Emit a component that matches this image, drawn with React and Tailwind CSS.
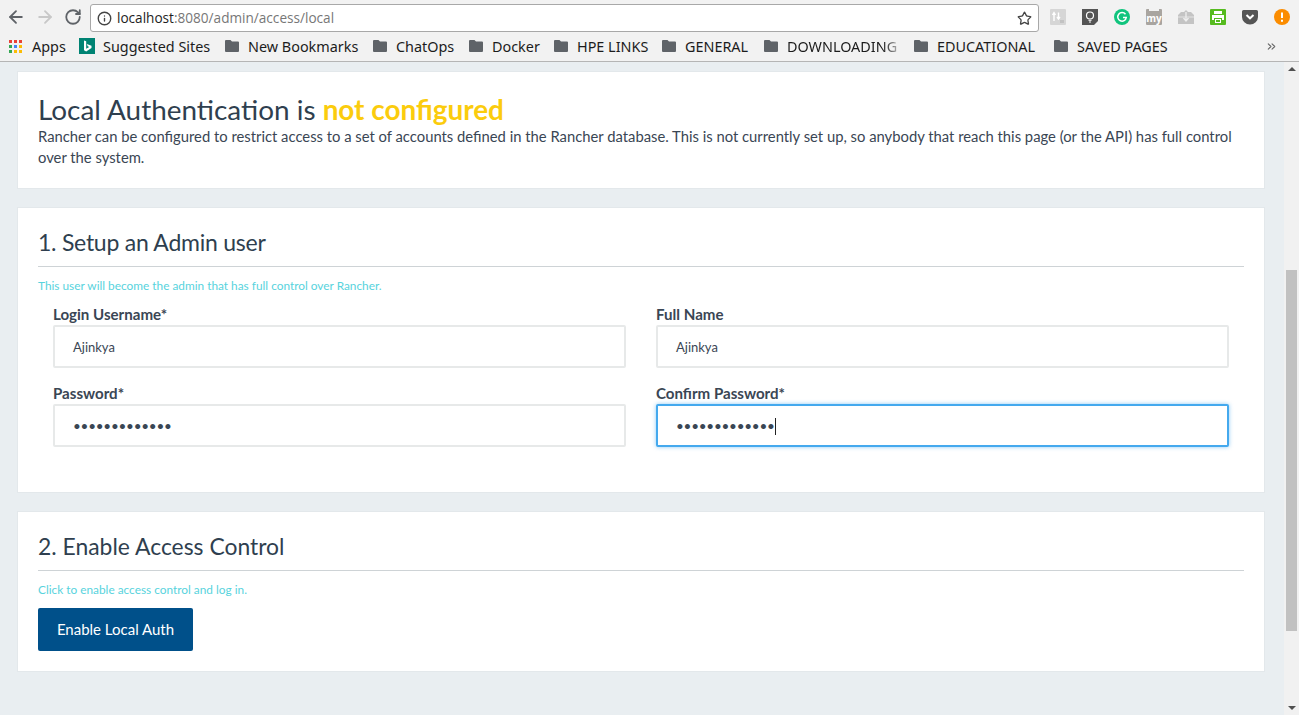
import React from "react";
import { ArrowLeft, ArrowRight, RotateCw, Info, Star, ChevronsRight } from "lucide-react";

const Folder = () => (
  <svg width="14" height="12" viewBox="0 0 14 12" className="shrink-0">
    <path d="M1 0h4.5l1.5 1.5h6a1 1 0 0 1 1 1V11a1 1 0 0 1-1 1H1a1 1 0 0 1-1-1V1a1 1 0 0 1 1-1z" fill="#5f6368" />
  </svg>
);

const AppsIcon = () => {
  const c = ["#ea4335", "#ea4335", "#ea4335", "#34a853", "#4285f4", "#fbbc05", "#34a853", "#fbbc05", "#fbbc05"];
  return (
    <div className="grid grid-cols-3 gap-[2px] w-[13px] shrink-0 mr-[1px]">
      {c.map((x, i) => (
        <span key={i} className="w-[3px] h-[3px]" style={{ background: x }} />
      ))}
    </div>
  );
};

const Bing = () => (
  <svg width="16" height="16" viewBox="0 0 16 16" className="shrink-0 mr-[-1px]">
    <rect width="16" height="16" fill="#008373" />
    <path d="M5 2.5l2.2.8v7.4l3-1.7-1.5-.7-.9-2.2 4.7 1.6v2.4L7.2 13.5 5 12.3z" fill="#fff" />
  </svg>
);

const Mark = ({ label, icon, w }) => (
  <div className="flex items-center shrink-0" style={{ width: w }}>
    {icon}
    <span className="ml-[9px] whitespace-nowrap">{label}</span>
  </div>
);

const ExtIcons = () => (
  <div className="flex items-center ml-[11px] gap-[16px]">
    <svg width="16" height="16" viewBox="0 0 16 16"><rect width="16" height="16" rx="1" fill="#d6d6d6" /><path d="M4 12V5M2.500 6L4 3.500 5.500 6M8.500 3.500v6M7 8l1.500 2L10 8" stroke="#fff" strokeWidth="1.400" fill="none" /><rect x="10" y="11" width="4" height="3" fill="#c2c2c2" /></svg>
    <svg width="16" height="16" viewBox="0 0 16 16"><path d="M0 0h16v12l-4 4H0z" fill="#555" /><circle cx="8" cy="6.500" r="3.500" fill="none" stroke="#fff" strokeWidth="1.200" /><path d="M6.500 11.300h3M7 13h2" stroke="#fff" /></svg>
    <svg width="16" height="16" viewBox="0 0 16 16"><circle cx="8" cy="8" r="8" fill="#10c47d" /><path d="M11.500 5.300A4.300 4.300 0 1 0 12.300 8.500H9" fill="none" stroke="#fff" strokeWidth="1.500" /></svg>
    <svg width="16" height="16" viewBox="0 0 16 16"><path d="M1 0h2v2h10V0h2a1 1 0 0 1 1 1v14a1 1 0 0 1-1 1H1a1 1 0 0 1-1-1V1a1 1 0 0 1 1-1z" fill="#a9a5a0" /><text x="8" y="13" textAnchor="middle" fontSize="10" fontWeight="700" fill="#fff" fontFamily="Open Sans">my</text></svg>
    <svg width="16" height="16" viewBox="0 0 16 16"><path d="M0 6l3-3h3l2-2 2 2h3l3 3v9H0z" fill="#c4c4c4" /><path d="M0 8h16" stroke="#e4e4e4" /><path d="M8 3v8M5.500 9L8 12l2.500-3" stroke="#eee" strokeWidth="1.300" fill="none" /></svg>
    <svg width="16" height="16" viewBox="0 0 16 16"><rect width="16" height="16" rx="1" fill="#56bb1f" /><path d="M4 2h8v3H4zM2 6h12v5h-2V9H4v2H2zM5 10h6v4H5z" fill="#fff" /><path d="M6 11h4v2H6z" fill="#56bb1f" /></svg>
    <svg width="16" height="16" viewBox="0 0 16 16"><path d="M1.500 1h13A1.500 1.500 0 0 1 16 2.500V8a8 7.500 0 0 1-16 0V2.500A1.500 1.500 0 0 1 1.500 1z" fill="#555" /><path d="M4.500 6L8 9.300 11.500 6" fill="none" stroke="#fff" strokeWidth="2" /></svg>
    <svg width="16" height="16" viewBox="0 0 16 16"><circle cx="8" cy="8" r="8" fill="#fb8c00" /><path d="M8 3.500v5.500M8 10.800v2" stroke="#fff" strokeWidth="2" /></svg>
  </div>
);

const Field = ({ label, value, focused, password }) => (
  <div className="flex-1 min-w-0">
    <div className="text-[15.100px] font-bold leading-[20px] text-[#3a4654]">{label}</div>
    <div
      className={
        "mt-[1px] h-[43px] flex items-center pt-[2px] pl-[18px] bg-white text-[13px] text-[#3a4654] border-2 rounded-[2px] " +
        (focused ? "border-[#44a9ee] shadow-[0_0_4px_rgba(68,169,238,0.6)]" : "border-[#e7e9e9]")
      }
    >
      {password ? (
        <>
          <span className="text-[13.500px] tracking-[-0.250px] leading-none">{"•".repeat(13)}</span>
          {focused && <span className="w-px h-[17px] bg-[#222]" />}
        </>
      ) : (
        value
      )}
    </div>
  </div>
);

const Card = ({ className, children }) => (
  <section className={"bg-white border border-[#e3e8eb] ml-[17px] mr-[19px] px-[20px] " + className}>{children}</section>
);

export default function App() {
  return (
    <div className="w-[1299px] h-[715px] overflow-hidden flex flex-col bg-[#e9eef1] font-['Lato',sans-serif] text-[#34414e]">
      <header className="h-[62px] shrink-0 bg-[#f2f2f2] border-b border-[#b5b5b5] font-['Open_Sans',sans-serif]">
        <div className="h-[34px] flex items-center">
          <div className="flex items-center pl-[6px] gap-[9px] w-[90px] text-[#5f6368]">
            <ArrowLeft size={20} strokeWidth={2.200} />
            <ArrowRight size={20} strokeWidth={2.200} className="text-[#c8c8c8]" />
            <RotateCw size={18} strokeWidth={2.400} />
          </div>
          <div className="w-[949px] h-[28px] mt-[2px] bg-white border border-[#a8a8a8] rounded-[3px] flex items-center pl-[6px] pr-[6px] text-[13.600px]">
            <Info size={15} strokeWidth={2.200} className="text-[#444]" />
            <span className="ml-[5px] text-[#1e1e1e]">localhost</span>
            <span className="text-[#777]">:8080/admin/access/local</span>
            <Star size={15} strokeWidth={2.100} className="ml-auto text-[#444]" />
          </div>
          <ExtIcons />
        </div>
        <div className="h-[25px] flex items-center pl-[9px] text-[14.400px] font-['Noto_Sans',sans-serif] text-[#1c1c1c] relative">
          <Mark w={70} label="Apps" icon={<AppsIcon />} />
          <Mark w={146} label="Suggested Sites" icon={<Bing />} />
          <Mark w={148} label="New Bookmarks" icon={<Folder />} />
          <Mark w={96} label="ChatOps" icon={<Folder />} />
          <Mark w={85} label="Docker" icon={<Folder />} />
          <Mark w={108} label="HPE LINKS" icon={<Folder />} />
          <Mark w={102} label="GENERAL" icon={<Folder />} />
          <div className="flex items-center shrink-0 w-[150px]">
            <Folder />
            <span className="ml-[9px] w-[113px] overflow-hidden whitespace-nowrap bg-gradient-to-r from-[#1c1c1c] from-[85%] to-[#d0d0d0] bg-clip-text text-transparent">DOWNLOADING</span>
          </div>
          <Mark w={140} label="EDUCATIONAL" icon={<Folder />} />
          <Mark w={200} label="SAVED PAGES" icon={<Folder />} />
          <ChevronsRight size={13} className="text-[#666] absolute right-[21px] top-[6px]" />
        </div>
      </header>

      <div className="flex-1 flex min-h-0">
        <main className="w-[1284px] pt-[9px] flex flex-col gap-[18px]">
          <Card className="h-[118px] pt-[20px]">
            <h1 className="text-[27.900px] leading-[34px] text-[#2f3f4f]">
              Local Authentication is <span className="text-[#fbcc0d] font-bold">not configured</span>
            </h1>
            <p className="text-[14.800px] leading-[21px] text-[#3a4654]">
              Rancher can be configured to restrict access to a set of accounts defined in the Rancher database. This is not currently set up, so anybody that reach this page (or the API) has full control over the system.
            </p>
          </Card>
          <Card className="h-[286px] pt-[19px]">
            <h2 className="text-[23px] tracking-[-0.250px] leading-[30px] text-[#2f3f4f] pb-[9px] border-b border-[#ced3d6]">1. Setup an Admin user</h2>
            <p className="text-[11.850px] leading-[16px] mt-[11px] text-[#58d3dd]">This user will become the admin that has full control over Rancher.</p>
            <div className="px-[15px] mt-[10px] flex flex-col gap-[15px]">
              <div className="flex gap-[30px]">
                <Field label="Login Username*" value="Ajinkya" />
                <Field label="Full Name" value="Ajinkya" />
              </div>
              <div className="flex gap-[30px]">
                <Field label="Password*" password />
                <Field label="Confirm Password*" password focused />
              </div>
            </div>
          </Card>
          <Card className="h-[161px] pt-[19px]">
            <h2 className="text-[22.900px] leading-[30px] text-[#2f3f4f] pb-[9px] border-b border-[#ced3d6]">2. Enable Access Control</h2>
            <p className="text-[11.850px] leading-[16px] mt-[11px] text-[#58d3dd]">Click to enable access control and log in.</p>
            <button className="mt-[10px] w-[155px] h-[43px] bg-[#00508a] text-white text-[15px] rounded-[2px]">Enable Local Auth</button>
          </Card>
        </main>
        <aside className="w-[15px] shrink-0 bg-[#f1f1f1] flex flex-col items-center pt-[5px] pb-[5px] relative">
          <span className="w-0 h-0 border-x-[4px] border-x-transparent border-b-[4px] border-b-[#505050]" />
          <div className="mt-[199px] w-[11px] h-[361px] bg-[#c1c1c1]" />
          <span className="mt-auto w-0 h-0 border-x-[4px] border-x-transparent border-t-[4px] border-t-[#505050]" />
        </aside>
      </div>
    </div>
  );
}
